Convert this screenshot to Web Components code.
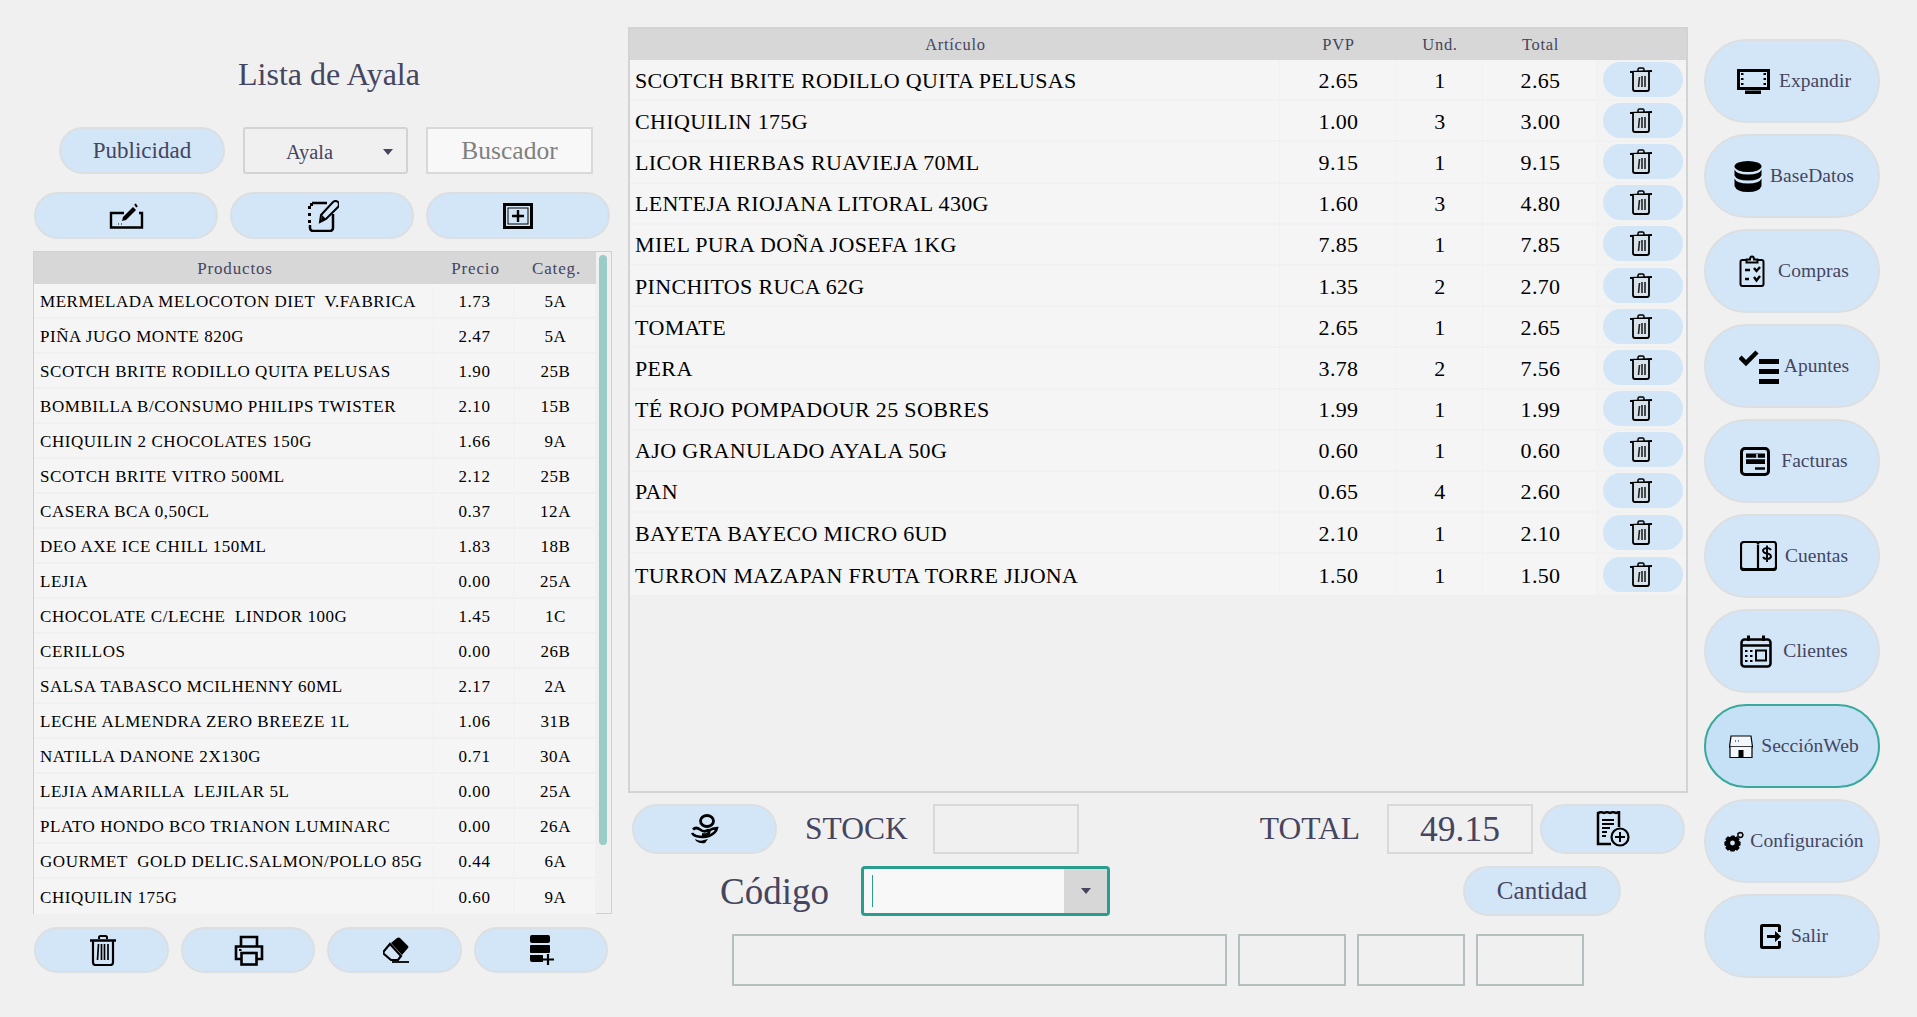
<!DOCTYPE html>
<html lang="es">
<head>
<meta charset="utf-8">
<title>Lista de Ayala</title>
<style>
  html, body { margin: 0; height: 100%; background: #f0f0f0; overflow: hidden; }
  body { font-family: "Liberation Serif", "Times New Roman", serif; color: #45455f; }
</style>
</head>
<body>
<app-shell></app-shell>

<script>
// Icon drawings, keyed by name: [width, height, svg body]
const ICONS = {
  penbox: [35, 26, `<path d="M15 10H2v14.500h31V10h-3" fill="none" stroke="#000" stroke-width="2.400"/><path d="M13 18l1-4L24 4l3 3-10 10z"/><path d="M26 1l2 3" stroke="#000" stroke-width="2"/><path d="M9 21h1M12 21h1" stroke="#000"/>`],
  notepen: [33, 32, `<path d="M6 3h15M27 14v14a3 3 0 0 1-3 3H7a3 3 0 0 1-3-3v-3" fill="none" stroke="#000" stroke-width="2.500"/><path d="M2 6h3v3H2zM2 13h3v3H2zM2 20h3v3H2zM4 3h3v3H4z"/><path d="M14 22l1-7L27 2q3-2 5 0t0 5L20 19z" fill="none" stroke="#000" stroke-width="2"/><path d="M15 21l1-6 4 4z"/>`],
  addframe: [30, 26, `<rect x="1.500" y="1.500" width="27" height="23" fill="none" stroke="#000" stroke-width="3"/><rect x="5" y="5" width="20" height="16" fill="none" stroke="#000"/><path d="M15 7v12M9 13h12" stroke="#000" stroke-width="2.400"/>`],
  trash: [22, 25, `<path d="M8 4V2.500q0-1.500 1.500-1.500h3Q14 1 14 2.500V4" fill="none" stroke="#000" stroke-width="1.500"/><path d="M0 5l22-1" stroke="#000" stroke-width="2"/><path d="M3 5v17q0 2 2 2h12q2 0 2-2V5" fill="#d8e2ea" stroke="#000" stroke-width="1.800"/><path d="M8.500 20l1-10M12 20V9M15 20V9" stroke="#222" stroke-width="1.600"/>`],
  trashbig: [26, 31, `<path d="M9 4V2.500Q9 1 10.500 1h5Q17 1 17 2.500V4" fill="none" stroke="#000" stroke-width="2"/><path d="M0 5.500h26" stroke="#000" stroke-width="2.500"/><path d="M3 6v21.500q0 2.500 2.500 2.500h15q2.500 0 2.500-2.500V6" fill="none" stroke="#000" stroke-width="2.200"/><path d="M7.500 25l1-16M11.500 25V9M14.500 25V9M18 25V9" stroke="#000" stroke-width="1.700"/>`],
  printer: [30, 31, `<path d="M7 11V2h16v9" fill="none" stroke="#000" stroke-width="2.600"/><path d="M7 24H2V11.500h26V24h-5" fill="none" stroke="#000" stroke-width="2.600"/><rect x="7.500" y="18" width="15" height="11.500" fill="none" stroke="#000" stroke-width="2.600"/><path d="M5 15h2.500" stroke="#000" stroke-width="2"/>`],
  eraser: [26, 26, `<path d="M17 1l8 8q1 1 0 2l-6 7-11-12 6-5q2-1 3 0z"/><path d="M7 7l11 12-3 4H8L1 17q-1-1 0-3z" fill="none" stroke="#000" stroke-width="2.200"/><path d="M9 25h17" stroke="#000" stroke-width="1.800"/>`],
  rowadd: [26, 32, `<rect x="1" y="1" width="20" height="8" rx="2"/><rect x="1" y="11" width="20" height="8" rx="1"/><path d="M1 21h13v7H3q-2 0-2-2z"/><path d="M19 20v11M14 25.500h11" stroke="#000" stroke-width="2.200"/>`],
  handcoin: [30, 30, `<ellipse cx="17" cy="7" rx="6.500" ry="5.500" fill="none" stroke="#000" stroke-width="2.800"/><path d="M3 15.500q3-3 7 0t7 1q3-1 2 2t-7 2" fill="none" stroke="#000" stroke-width="2.800"/><path d="M18 17q5-3 9-3-1 5-8 8-6 2-13 0-3-1-4-3" fill="none" stroke="#000" stroke-width="2.600"/><path d="M5 25q5 3 9 1l4-1-3 4q-5 1-9-2z"/>`],
  receiptadd: [34, 36, `<path d="M2 1v32h13" fill="none" stroke="#000" stroke-width="2.500"/><path d="M2 2l3-1 3 1 3-1 3 1 3-1 3 1 3-1v15" fill="none" stroke="#000" stroke-width="2.500"/><path d="M6 9h12M6 13h12M6 17h8M6 21h5M6 25h4" stroke="#000" stroke-width="2"/><circle cx="24" cy="26" r="8.500" fill="#d2e6f8" stroke="#000" stroke-width="2.200"/><path d="M24 21v10M19 26h10" stroke="#000" stroke-width="2"/>`],
  monitor: [33, 25, `<rect x="1.500" y="1.500" width="30" height="18" fill="none" stroke="#000" stroke-width="3"/><path d="M4 5h2.500M4 10h2.500M4 15h2.500M26.500 5H29M26.500 10H29M26.500 15H29" stroke="#000" stroke-width="2"/><path d="M8 21.500h16V25H8z"/>`],
  database: [28, 31, `<ellipse cx="14" cy="5.500" rx="13.500" ry="5.500"/><path d="M.5 8.500q2 5 13.500 5t13.500-5v6q-2 5-13.500 5T.5 14.500z"/><path d="M.5 17.500q2 5 13.500 5t13.500-5v7.500Q25.500 31 14 31T.5 25z"/><path d="M1 8q3 4 13 4t13-4M1 17q3 4 13 4t13-4" fill="none" stroke="#d2e6f8" stroke-width="1.200"/>`],
  clipboard: [26, 32, `<path d="M7 5H3.500Q1.500 5 1.500 7v22q0 2 2 2h19q2 0 2-2V7q0-2-2-2H19" fill="none" stroke="#000" stroke-width="2"/><path d="M7.500 7.500V4.500h3.500Q11 1.500 13 1.500T15 4.500h3.500v3z" fill="none" stroke="#000" stroke-width="2"/><path d="M6 15h5M6 24h4" stroke="#000" stroke-width="2.500"/><path d="M15 13l2.500 3L21 12M15 22l2.500 3.500L21 21" fill="none" stroke="#000" stroke-width="2.400"/>`],
  checklist: [40, 35, `<path d="M1 8l6 6L18 3" fill="none" stroke="#000" stroke-width="4.500"/><path d="M20 10h20v5H20zM20 20h20v5H20zM20 30h20v5H20z"/>`],
  invoice: [30, 29, `<rect x="1.500" y="1.500" width="27" height="26" rx="3.500" fill="none" stroke="#000" stroke-width="3"/><path d="M6 6.500h19V17H6z"/><path d="M6 11.500h19M17 7v4" stroke="#d2e6f8" stroke-width="1.500"/><path d="M15 21.500h10" stroke="#000" stroke-width="2.500"/>`],
  bookdollar: [37, 31, `<path d="M18 3.500V27M18 3a2 2 0 0 0-2-2H4Q1 1 1 4v22q0 3 3 3h30q2 0 2-3V4q0-3-2-3H20a2 2 0 0 0-2 2" fill="none" stroke="#000" stroke-width="2.200"/><path d="M1 27q1 3 3 3h29q3 0 3-3v-2q-1 2-3 2H4q-2 0-3-2z"/><path d="M31 9q-1-2-4-2t-4 2q0 3 4 3.500t4 3.500q-1 2-4 2t-4-2M27 4.500V21" fill="none" stroke="#000" stroke-width="1.900"/>`],
  calendar: [32, 33, `<rect x="1.500" y="4.500" width="29" height="27" rx="3" fill="none" stroke="#000" stroke-width="2.500"/><path d="M1 10.500h30" stroke="#000" stroke-width="2.500"/><path d="M7 .5h3V6H7zM22 .5h3V6h-3z"/><rect x="16" y="15.500" width="10" height="10" fill="none" stroke="#000" stroke-width="2"/><path d="M5 16h2.500M10 16h2.500M5 21h2.500M10 21h2.500M5 26h2.500M10 26h2.500" stroke="#000" stroke-width="2"/>`],
  store: [24, 23, `<path d="M2 1h20l1.500 11H.5z" fill="#f2f7fb" stroke="#000" stroke-width="1.200"/><path d="M1 12h22" stroke="#000"/><path d="M1 12v10.500h22V12" fill="#f2f7fb" stroke="#000" stroke-width="1.200"/><path d="M9.500 15h5v8h-5z"/><path d="M6 6h1M9 6h1" stroke="#000"/>`],
  gears: [20, 21, `<path d="M8 5l2 0 1 2 2-1 2 2-1 2 2 1v3l-2 1 1 2-2 2-2-1-1 2H7l-1-2-2 1-2-2 1-2-2-1v-3l2-1-1-2 2-2 2 1z" stroke="#000" stroke-width="1.200"/><circle cx="8.500" cy="12" r="2.400" fill="#d2e6f8"/><path d="M16 1.500l2 .5 1 2-1 2-2 .5-2-1v-3z" fill="none" stroke="#000" stroke-width="1.500"/>`],
  exit: [21, 25, `<path d="M19.500 8V2.500q0-1-1-1H2.500q-1 0-1 1v20q0 1 1 1h16q1 0 1-1V17" fill="none" stroke="#000" stroke-width="3"/><path d="M7 11h8V7l6 5.500-6 5.500v-4H7z"/>`]
};

class AppIcon extends HTMLElement {
  connectedCallback() {
    const [w, h, body] = ICONS[this.getAttribute('name')];
    this.attachShadow({ mode: 'open' }).innerHTML = `
      <style>:host { display: inline-flex; flex: none; } svg { display: block; }</style>
      <svg width="${w}" height="${h}" viewBox="0 0 ${w} ${h}" aria-hidden="true">${body}</svg>`;
  }
}

class PillButton extends HTMLElement {
  connectedCallback() {
    const gap = this.getAttribute('gap') || 0;
    const nudge = this.getAttribute('nudge') || 0;
    this.attachShadow({ mode: 'open' }).innerHTML = `
      <style>
        :host { display: block; height: 100%; }
        button {
          display: flex; align-items: center; justify-content: center; gap: ${gap}px;
          width: 100%; height: 100%; box-sizing: border-box; padding: 0 0 0 ${nudge}px;
          background: #d2e6f8; border: 2px solid #dcdfe2; border-radius: 999px;
          font: inherit; color: inherit; letter-spacing: inherit;
        }
        :host([flat]) button { border: none; }
        :host([active]) button { background: #c6e0f6; border-color: #3aa89c; }
      </style>
      <button type="button"><slot></slot></button>`;
  }
}

class TextBox extends HTMLElement {
  connectedCallback() {
    this.attachShadow({ mode: 'open' }).innerHTML = `
      <style>
        :host {
          display: flex; align-items: center; justify-content: center; box-sizing: border-box;
          border: 2px solid #d9d9d9; height: 100%;
        }
        :host([variant=search]) { background: #f8f8f8; color: #808080; font-size: 25.500px; }
        :host([variant=field]) { border-color: #b3c0bf; }
      </style>
      <slot></slot>`;
  }
}

class DropSelect extends HTMLElement {
  connectedCallback() {
    this.attachShadow({ mode: 'open' }).innerHTML = `
      <style>
        :host {
          display: flex; align-items: center; box-sizing: border-box; height: 100%;
          border: 2px solid #d3d3d3; border-radius: 3px; font-size: 20.500px; padding: 3px 13px 0 41px;
        }
        span { flex: 1; }
        i { border: 5px solid transparent; border-top: 6px solid #45455f; border-bottom: 0; }
      </style>
      <span><slot></slot></span><i></i>`;
  }
}

class ComboBox extends HTMLElement {
  connectedCallback() {
    this.attachShadow({ mode: 'open' }).innerHTML = `
      <style>
        :host {
          display: flex; box-sizing: border-box; height: 100%; width: 249px;
          border: 3px solid #2a9d8f; border-radius: 4px; background: #f8f8f8;
        }
        .edit { flex: 1; display: flex; align-items: center; padding-left: 8px; }
        .caret { width: 1px; height: 32px; background: #2a9d8f; }
        .arrow { width: 43px; background: #d7d7d7; display: flex; align-items: center; justify-content: center; }
        i { border: 5px solid transparent; border-top: 6px solid #45455f; border-bottom: 0; }
      </style>
      <div class="edit"><div class="caret"></div></div>
      <div class="arrow"><i></i></div>`;
  }
}

class ProductTable extends HTMLElement {
  connectedCallback() {
    const rows = [
      ['MERMELADA MELOCOTON DIET  V.FABRICA', '1.73', '5A'],
      ['PIÑA JUGO MONTE 820G', '2.47', '5A'],
      ['SCOTCH BRITE RODILLO QUITA PELUSAS', '1.90', '25B'],
      ['BOMBILLA B/CONSUMO PHILIPS TWISTER', '2.10', '15B'],
      ['CHIQUILIN 2 CHOCOLATES 150G', '1.66', '9A'],
      ['SCOTCH BRITE VITRO 500ML', '2.12', '25B'],
      ['CASERA BCA 0,50CL', '0.37', '12A'],
      ['DEO AXE ICE CHILL 150ML', '1.83', '18B'],
      ['LEJIA', '0.00', '25A'],
      ['CHOCOLATE C/LECHE  LINDOR 100G', '1.45', '1C'],
      ['CERILLOS', '0.00', '26B'],
      ['SALSA TABASCO MCILHENNY 60ML', '2.17', '2A'],
      ['LECHE ALMENDRA ZERO BREEZE 1L', '1.06', '31B'],
      ['NATILLA DANONE 2X130G', '0.71', '30A'],
      ['LEJIA AMARILLA  LEJILAR 5L', '0.00', '25A'],
      ['PLATO HONDO BCO TRIANON LUMINARC', '0.00', '26A'],
      ['GOURMET  GOLD DELIC.SALMON/POLLO 85G', '0.44', '6A'],
      ['CHIQUILIN 175G', '0.60', '9A']
    ];
    this.attachShadow({ mode: 'open' }).innerHTML = `
      <style>
        :host { display: flex; box-sizing: border-box; height: 663px; border: 1px solid #d0d0d0; }
        .table { width: 562px; }
        .row { display: grid; grid-template-columns: 400px 81px 81px; }
        .head { height: 32px; box-sizing: border-box; padding: 2px 0 0 1px; background: #d7d7d7; font-size: 17px; letter-spacing: .85px; }
        .head div { display: flex; align-items: center; justify-content: center; }
        .item { height: 35px; box-sizing: border-box; padding-top: 2px; background: #f5f5f5; border-bottom: 2px solid #f0f0f0;
                color: #000; font-size: 17px; letter-spacing: .55px; }
        .item:last-child { border-bottom: none; }
        .item div { display: flex; align-items: center; justify-content: center; border-right: 1px solid #f0f0f0; padding-left: 1px; }
        .item div:first-child { justify-content: flex-start; padding-left: 6px; white-space: pre; }
        .track { flex: 1; padding: 3px 0 0 3px; }
        .thumb { width: 7.500px; height: 590px; background: #9accc8; border-radius: 4px; }
      </style>
      <div class="table">
        <div class="row head"><div>Productos</div><div>Precio</div><div>Categ.</div></div>
        ${rows.map(r => `<div class="row item"><div>${r[0]}</div><div>${r[1]}</div><div>${r[2]}</div></div>`).join('')}
      </div>
      <div class="track"><div class="thumb"></div></div>`;
  }
}

class TicketTable extends HTMLElement {
  connectedCallback() {
    const rows = [
      ['SCOTCH BRITE RODILLO QUITA PELUSAS', '2.65', '1', '2.65'],
      ['CHIQUILIN 175G', '1.00', '3', '3.00'],
      ['LICOR HIERBAS RUAVIEJA 70ML', '9.15', '1', '9.15'],
      ['LENTEJA RIOJANA LITORAL 430G', '1.60', '3', '4.80'],
      ['MIEL PURA DOÑA JOSEFA 1KG', '7.85', '1', '7.85'],
      ['PINCHITOS RUCA 62G', '1.35', '2', '2.70'],
      ['TOMATE', '2.65', '1', '2.65'],
      ['PERA', '3.78', '2', '7.56'],
      ['TÉ ROJO POMPADOUR 25 SOBRES', '1.99', '1', '1.99'],
      ['AJO GRANULADO AYALA 50G', '0.60', '1', '0.60'],
      ['PAN', '0.65', '4', '2.60'],
      ['BAYETA BAYECO MICRO 6UD', '2.10', '1', '2.10'],
      ['TURRON MAZAPAN FRUTA TORRE JIJONA', '1.50', '1', '1.50']
    ];
    this.attachShadow({ mode: 'open' }).innerHTML = `
      <style>
        :host { display: block; box-sizing: border-box; height: 766px; border: 2px solid #d3d3d3; }
        .row { display: grid; grid-template-columns: 650px 116px 87px 114px 89px; }
        .head { height: 31px; background: #d7d7d7; font-size: 16.500px; letter-spacing: .7px; }
        .head div { display: flex; align-items: center; justify-content: center; padding-left: 1px; }
        .item { height: 41.200px; box-sizing: border-box; background: #f5f5f5; border-bottom: 2px solid #f1f1f1;
                color: #000; font-size: 22px; letter-spacing: .35px; }
        .item:last-child { border-bottom: none; }
        .item div { display: flex; align-items: center; justify-content: center; border-right: 1px solid #f1f1f1; padding: 2px 0 0 2px; }
        .item div:first-child { justify-content: flex-start; padding-left: 5px; }
        .item .del { border: none; padding: 0 3px 0 5px; background: #f3f3f3; }
        pill-button { width: 80px; height: 35px; margin-top: -1px; }
      </style>
      <div class="row head"><div>Artículo</div><div>PVP</div><div>Und.</div><div>Total</div><div></div></div>
      ${rows.map(r => `
        <div class="row item">
          <div>${r[0]}</div><div>${r[1]}</div><div>${r[2]}</div><div>${r[3]}</div>
          <div class="del"><pill-button flat><app-icon name="trash" style="margin-left:-3px"></app-icon></pill-button></div>
        </div>`).join('')}`;
  }
}

class ProductPanel extends HTMLElement {
  connectedCallback() {
    this.attachShadow({ mode: 'open' }).innerHTML = `
      <style>
        :host { display: block; }
        h1 { margin: 0; height: 127px; box-sizing: border-box; padding: 54px 0 0 13px; text-align: center; font-weight: 400; font-size: 32px; line-height: 40px; }
        .filters { display: grid; grid-template-columns: 166px 165px 167px; gap: 18px; height: 47px; padding-left: 26px; font-size: 23px; }
        .tools { display: grid; grid-template-columns: repeat(3, 184px); column-gap: 12px; height: 47px; margin: 18px 0 12px 1px; }
        .actions { display: grid; grid-template-columns: repeat(4, 134.500px); gap: 12px; height: 46px; margin: 13px 0 0 1px; }
      </style>
      <h1>Lista de Ayala</h1>
      <div class="filters">
        <pill-button>Publicidad</pill-button>
        <drop-select>Ayala</drop-select>
        <text-box variant="search">Buscador</text-box>
      </div>
      <div class="tools">
        <pill-button><app-icon name="penbox"></app-icon></pill-button>
        <pill-button><app-icon name="notepen"></app-icon></pill-button>
        <pill-button><app-icon name="addframe"></app-icon></pill-button>
      </div>
      <product-table></product-table>
      <div class="actions">
        <pill-button nudge="3"><app-icon name="trashbig"></app-icon></pill-button>
        <pill-button nudge="3"><app-icon name="printer"></app-icon></pill-button>
        <pill-button nudge="3"><app-icon name="eraser"></app-icon></pill-button>
        <pill-button nudge="3"><app-icon name="rowadd"></app-icon></pill-button>
      </div>`;
  }
}

class OrderPanel extends HTMLElement {
  connectedCallback() {
    this.attachShadow({ mode: 'open' }).innerHTML = `
      <style>
        :host { display: block; padding-top: 27px; }
        .totals { display: grid; grid-template-columns: 145px 156px 146px 308px 146px 145px; height: 50px; margin: 11px 0 0 4px; font-size: 31.500px; }
        .totals span { display: flex; align-items: center; }
        .stock { padding-left: 28px; }
        .total { justify-content: flex-end; padding-right: 27px; }
        .sum { font-size: 35.500px; }
        .totals pill-button:last-child { margin-left: 7px; width: 145px; }
        .code { display: flex; height: 50px; margin: 12px 0 0 92px; }
        .code span { width: 141px; font-size: 37px; display: flex; align-items: center; }
        .code pill-button { width: 158px; margin-left: 353px; font-size: 25px; }
        .fields { display: grid; grid-template-columns: 495px 108px 108px 108px; column-gap: 11px; height: 52px; margin: 18px 0 0 104px; }
      </style>
      <ticket-table></ticket-table>
      <div class="totals">
        <pill-button><app-icon name="handcoin"></app-icon></pill-button>
        <span class="stock">STOCK</span>
        <text-box></text-box>
        <span class="total">TOTAL</span>
        <text-box class="sum">49.15</text-box>
        <pill-button><app-icon name="receiptadd"></app-icon></pill-button>
      </div>
      <div class="code">
        <span>Código</span>
        <combo-box></combo-box>
        <pill-button>Cantidad</pill-button>
      </div>
      <div class="fields">
        <text-box variant="field"></text-box>
        <text-box variant="field"></text-box>
        <text-box variant="field"></text-box>
        <text-box variant="field"></text-box>
      </div>`;
  }
}

class SideNav extends HTMLElement {
  connectedCallback() {
    const items = [
      ['monitor', 'Expandir', 9],
      ['database', 'BaseDatos', 8],
      ['clipboard', 'Compras', 13],
      ['checklist', 'Apuntes', 5],
      ['invoice', 'Facturas', 11],
      ['bookdollar', 'Cuentas', 8],
      ['calendar', 'Clientes', 11],
      ['store', 'SecciónWeb', 8],
      ['gears', 'Configuración', 6],
      ['exit', 'Salir', 10]
    ];
    this.attachShadow({ mode: 'open' }).innerHTML = `
      <style>
        :host { display: flex; flex-direction: column; gap: 11px; padding-top: 39px; font-size: 19.500px; letter-spacing: .05px; }
        pill-button { height: 84px; }
      </style>
      ${items.map(([icon, label, gap]) => `
        <pill-button gap="${gap}" nudge="4" ${label === 'SecciónWeb' ? 'active' : ''}>
          <app-icon name="${icon}"></app-icon>${label}
        </pill-button>`).join('')}`;
  }
}

class AppShell extends HTMLElement {
  connectedCallback() {
    this.attachShadow({ mode: 'open' }).innerHTML = `
      <style>
        :host {
          display: grid; grid-template-columns: 579px 1060px 176px; column-gap: 16px;
          box-sizing: border-box; width: 1917px; height: 1017px; padding-left: 33px;
        }
      </style>
      <product-panel></product-panel>
      <order-panel></order-panel>
      <side-nav></side-nav>`;
  }
}

customElements.define('app-icon', AppIcon);
customElements.define('pill-button', PillButton);
customElements.define('text-box', TextBox);
customElements.define('drop-select', DropSelect);
customElements.define('combo-box', ComboBox);
customElements.define('product-table', ProductTable);
customElements.define('ticket-table', TicketTable);
customElements.define('product-panel', ProductPanel);
customElements.define('order-panel', OrderPanel);
customElements.define('side-nav', SideNav);
customElements.define('app-shell', AppShell);
</script>
</body>
</html>
